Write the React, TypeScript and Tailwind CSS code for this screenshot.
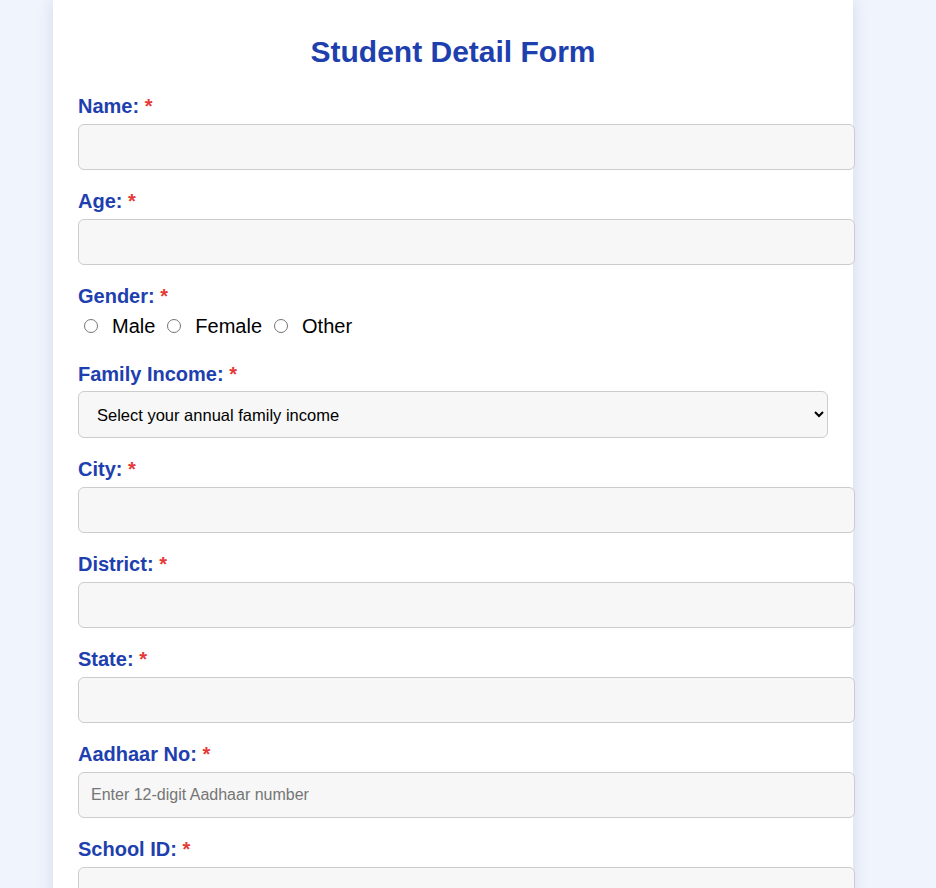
const fields = ["Name", "Age"];
const fields2 = ["City", "District", "State"];

function Label({ text }: { text: string }) {
  return (
    <label className="block text-[20px] leading-[23px] font-bold text-[#1e40af] mb-[6px]">
      {text}: <span className="text-[#e53935]">*</span>
    </label>
  );
}

function TextField({ label, placeholder }: { label: string; placeholder?: string }) {
  return (
    <div className="mb-[20px]">
      <Label text={label} />
      <input
        type="text"
        placeholder={placeholder}
        className="block w-[777px] h-[46px] px-[12px] text-[16px] bg-[#f7f7f7] border border-[#cccccc] rounded-[6px] outline-none placeholder:text-[#757575]"
      />
    </div>
  );
}

export default function App() {
  return (
    <div className="min-h-screen bg-[#eff4fd] font-['Liberation_Sans',Arial,sans-serif]">
      <div className="ml-[53px] w-[800px] min-h-screen bg-white px-[25px] pt-[35px] pb-[30px] shadow-[0_0_16px_rgba(30,40,90,0.12)]">
        <h2 className="text-[30px] leading-[34px] font-bold text-center text-[#1e40af] mb-[26px]">
          Student Detail Form
        </h2>

        {fields.map((f) => (
          <TextField key={f} label={f} />
        ))}

        <div className="mb-[25px]">
          <Label text="Gender" />
          <div className="flex items-center h-[24px] text-[20px] text-black">
            <input type="radio" name="gender" className="m-0 ml-[6px] w-[14px] h-[14px]" />
            <span className="ml-[14px]">Male</span>
            <input type="radio" name="gender" className="m-0 ml-[12px] w-[14px] h-[14px]" />
            <span className="ml-[14px]">Female</span>
            <input type="radio" name="gender" className="m-0 ml-[12px] w-[14px] h-[14px]" />
            <span className="ml-[14px]">Other</span>
          </div>
        </div>

        <div className="mb-[20px]">
          <label className="block text-[20px] leading-[23px] font-bold text-[#1e40af] mb-[5px]">
            Family Income: <span className="text-[#e53935]">*</span>
          </label>
          <select className="block w-[750px] h-[47px] px-[14px] text-[16.5px] text-black bg-[#f7f7f7] border border-[#cccccc] rounded-[6px] outline-none">
            <option>Select your annual family income</option>
            <option>Below ₹1,00,000</option>
            <option>₹1,00,000 - ₹3,00,000</option>
            <option>₹3,00,000 - ₹5,00,000</option>
            <option>Above ₹5,00,000</option>
          </select>
        </div>

        {fields2.map((f) => (
          <TextField key={f} label={f} />
        ))}

        <TextField label="Aadhaar No" placeholder="Enter 12-digit Aadhaar number" />
        <TextField label="School ID" />
      </div>
    </div>
  );
}
